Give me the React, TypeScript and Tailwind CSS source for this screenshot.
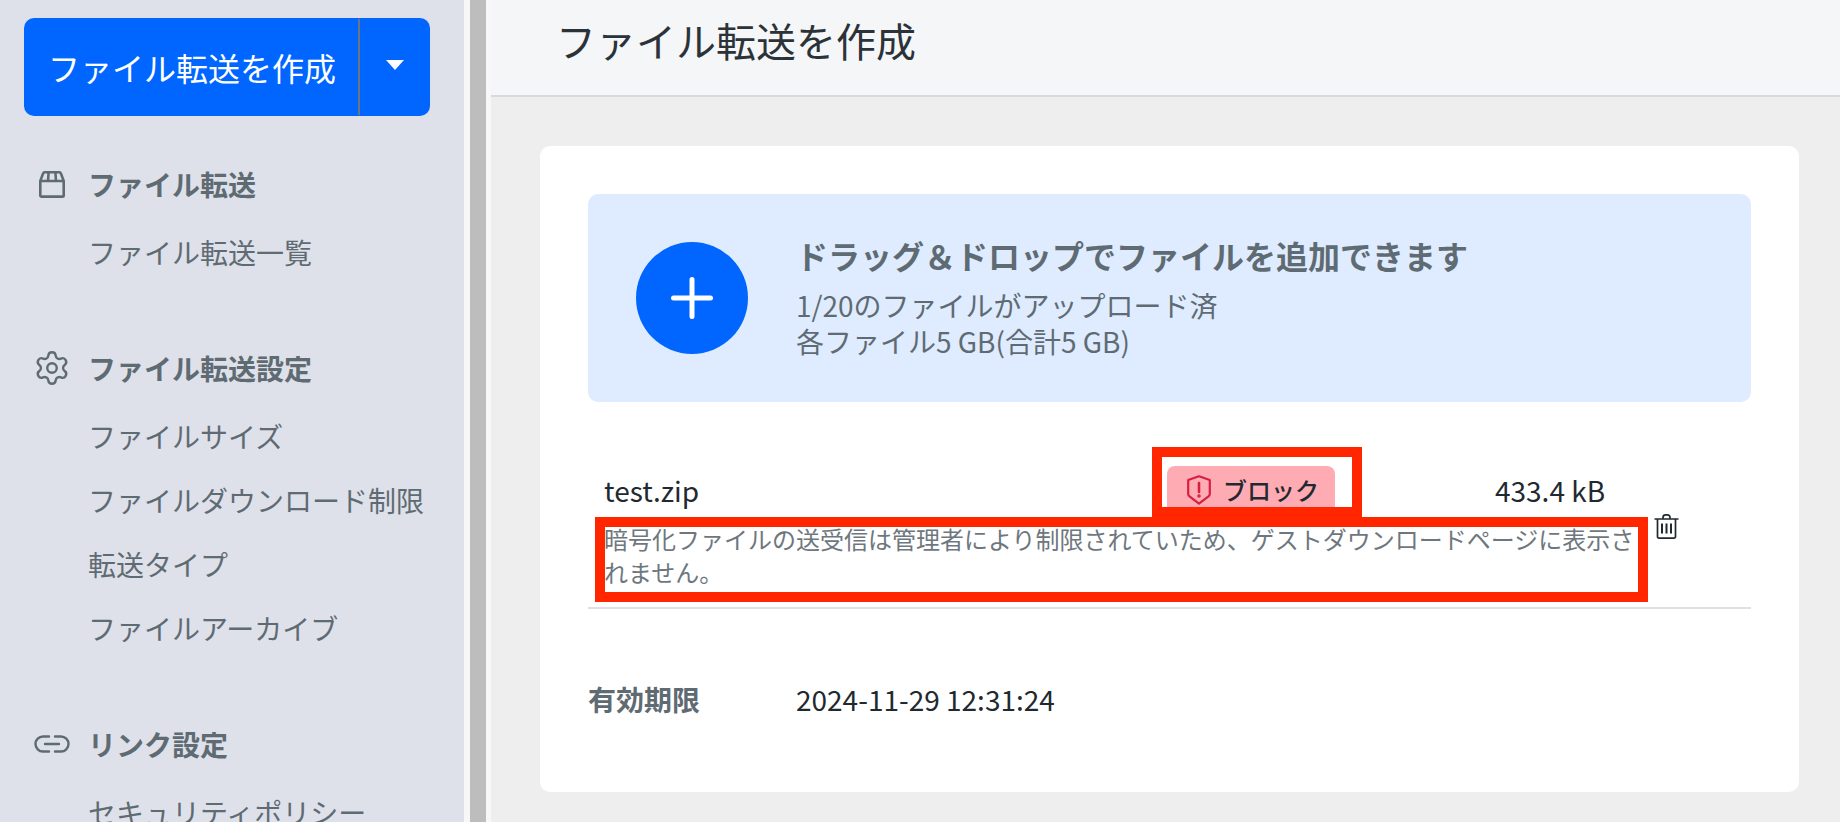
import React from "react";
import { Settings } from "lucide-react";

const FONT = { fontFamily: '"Noto Sans CJK JP", "Noto Sans", sans-serif' };

function Box() {
  return (
    <svg width="28" height="29" viewBox="0 0 28 29" fill="none" stroke="#5f6b73" strokeWidth="2.6" strokeLinejoin="round">
      <path d="M2.3 11 5 3.6a2 2 0 0 1 1.9-1.3h14.2a2 2 0 0 1 1.9 1.3l2.7 7.4v14.4a1.2 1.2 0 0 1-1.2 1.2H3.5a1.2 1.2 0 0 1-1.2-1.2z" />
      <path d="M2.3 11h23.4M10.6 2.5 10 11M17.4 2.5 18 11" />
    </svg>
  );
}
function LinkIcon() {
  return (
    <svg width="36" height="18" viewBox="0 0 36 18" fill="none" stroke="#5f6b73" strokeWidth="2.4" strokeLinecap="round">
      <path d="M15 1.5H9a7.5 7.5 0 0 0 0 15h6M21 1.5h6a7.5 7.5 0 0 1 0 15h-6M11 9h14" />
    </svg>
  );
}
function Shield() {
  return (
    <svg width="24" height="30" viewBox="0 0 24 30" fill="none" stroke="#d5203f" strokeWidth="2.2" strokeLinejoin="round">
      <path d="M12 1.3 22.8 5v14c0 1-.5 1.8-1.3 2.4L12 28.6 2.5 21.4c-.8-.6-1.3-1.4-1.3-2.4V5z" />
      <path d="M12 8v9" strokeWidth="2.6" strokeLinecap="round" />
      <circle cx="12" cy="21" r="0.7" fill="#d5203f" />
    </svg>
  );
}
function Trash() {
  return (
    <svg width="25" height="25" viewBox="0 0 25 25" fill="none" stroke="#1f2a30" strokeWidth="1.7" strokeLinejoin="round">
      <path d="M0.5 5h24M9 5V3.5a2.6 2.6 0 0 1 2.6-2.6h1.8A2.6 2.6 0 0 1 16 3.5V5M3.5 5v17.5a1.5 1.5 0 0 0 1.5 1.6h15a1.5 1.5 0 0 0 1.5-1.6V5" />
      <path d="M8 9.5v10M12.5 9.5v10M17 9.5v10" strokeWidth="2" />
    </svg>
  );
}

function Section({ icon, title, items, last }: { icon: React.ReactNode; title: string; items: string[]; last?: boolean }) {
  return (
    <div className={last ? "" : "mb-[64px]"}>
      <div className="flex items-center h-[40px]">
        <div className="w-[36px] flex justify-center shrink-0 mr-[18px]">{icon}</div>
        <span className="text-[28px] font-bold text-[#5f6b73] leading-[40px] whitespace-nowrap">{title}</span>
      </div>
      <div className="mt-[16px] flex flex-col">
        {items.map((t) => (
          <div key={t} className="pl-[54px] h-[64px] flex items-center text-[28px] text-[#5f6b73] whitespace-nowrap">
            {t}
          </div>
        ))}
      </div>
    </div>
  );
}

export default function App() {
  return (
    <div className="flex w-[1840px] h-[822px] overflow-hidden bg-[#eeeeee]" style={FONT}>
      <aside className="w-[464px] h-full shrink-0 bg-[#dee1e9] pl-[24px] pt-[18px] overflow-hidden">
        <div className="flex w-[406px] h-[98px] rounded-[10px] bg-[#0066ff] text-white mb-[48px]">
          <div className="w-[334px] flex items-center pl-[24px] text-[32px] whitespace-nowrap">ファイル転送を作成</div>
          <div className="w-[2px] bg-[#6b7680] my-[1px]"></div>
          <div className="flex-1 flex items-center justify-center pb-[4px]">
            <span className="block w-0 h-0 border-x-[9px] border-x-transparent border-t-[10px] border-t-white"></span>
          </div>
        </div>
        <div className="pl-[10px]">
          <Section icon={<Box />} title="ファイル転送" items={["ファイル転送一覧"]} />
          <Section
            icon={<Settings size={38} strokeWidth={1.5} color="#5f6b73" className="shrink-0" />}
            title="ファイル転送設定"
            items={["ファイルサイズ", "ファイルダウンロード制限", "転送タイプ", "ファイルアーカイブ"]}
          />
          <Section icon={<LinkIcon />} title="リンク設定" items={["セキュリティポリシー"]} last />
        </div>
      </aside>
      <div className="w-[6px] bg-[#f7f7f7] shrink-0"></div>
      <div className="w-[16px] bg-[#bdbdbd] shrink-0"></div>
      <div className="w-[5px] bg-[#f7f7f7] shrink-0"></div>
      <main className="flex-1 min-w-0 flex flex-col">
        <header className="h-[97px] pl-[65px] flex items-center bg-[#f5f6f8] border-b-2 border-[#d8d9de] shrink-0 pb-[16px]">
          <h1 className="text-[40px] text-[#2b3338] whitespace-nowrap">ファイル転送を作成</h1>
        </header>
        <div className="pl-[49px] pr-[41px] pt-[49px]">
          <div className="bg-white rounded-[10px] h-[646px] p-[48px]">
            <div className="h-[208px] rounded-[10px] bg-[#dfecff] flex items-start pl-[48px] pt-[48px]">
              <div className="w-[112px] h-[112px] rounded-full bg-[#0066ff] flex items-center justify-center shrink-0">
                <svg width="44" height="44" viewBox="0 0 44 44" stroke="#ffffff" strokeWidth="5" strokeLinecap="round">
                  <path d="M22 3.5v37M3.5 22h37" />
                </svg>
              </div>
              <div className="ml-[48px] -mt-[9px] text-[#5f6b73]">
                <div className="text-[32px] font-bold leading-[44px] whitespace-nowrap">ドラッグ＆ドロップでファイルを追加できます</div>
                <div className="text-[28px] leading-[36px] mt-[10px]">1/20のファイルがアップロード済</div>
                <div className="text-[28px] leading-[36px]">各ファイル5 GB(合計5 GB)</div>
              </div>
            </div>
            <div className="relative h-[207px] pt-[64px] border-b-2 border-[#dde1e6]">
              <div className="flex items-center pl-[16px] h-[48px]">
                <span className="w-[563px] text-[28px] text-[#1f2a30]">test.zip</span>
                <span className="w-[168px] h-[48px] rounded-[8px] bg-[#ffabb3] flex items-center pl-[20px] gap-[12px] text-[24px] font-medium text-[#1f2a30] shrink-0">
                  <Shield />
                  <span>ブロック</span>
                </span>
                <span className="ml-[160px] text-[28px] text-[#1f2a30] whitespace-nowrap">433.4 kB</span>
              </div>
              <div className="flex mt-[8px] pl-[16px]">
                <p className="w-[1035px] text-[24px] leading-[33px] text-[#6e777e]">暗号化ファイルの送受信は管理者により制限されていため、ゲストダウンロードページに表示されません。</p>
                <div className="ml-[15px] -mt-[8px] shrink-0"><Trash /></div>
              </div>
              <div className="absolute left-[564px] top-[45px] w-[210px] h-[70px] border-[10px] border-[#ff2600]"></div>
              <div className="absolute left-[7px] top-[115px] w-[1053px] h-[85px] border-[10px] border-[#ff2600]"></div>
            </div>
            <div className="flex items-center mt-[70px] h-[40px]">
              <span className="w-[208px] text-[28px] font-bold text-[#5f6b73]">有効期限</span>
              <span className="text-[28px] text-[#1f2a30]">2024-11-29 12:31:24</span>
            </div>
          </div>
        </div>
      </main>
    </div>
  );
}
